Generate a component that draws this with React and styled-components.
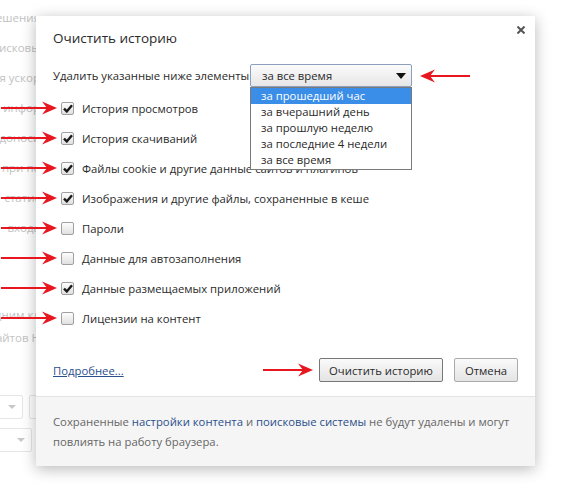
import React from 'react'
import styled, { createGlobalStyle } from 'styled-components'

const GlobalStyle = createGlobalStyle`
    html, body {
        margin: 0;
        padding: 0;
        background: #fff;
    }
    * {
        box-sizing: border-box;
    }
`

const Page = styled.div`
    position: relative;
    width: 569px;
    height: 497px;
    overflow: hidden;
    background: #fff;
    font-family: "Open Sans", "Noto Sans", sans-serif;
`

// faded settings page behind the modal
const BgColumn = styled.div`
    display: flex;
    flex-direction: column;
    width: 40px;
    padding-top: 2px;
`
const BgLine = styled.div`
    display: flex;
    justify-content: flex-end;
    align-items: center;
    overflow: hidden;
    white-space: nowrap;
    height: ${p => p.$h || 30}px;
    margin-top: ${p => p.$mt || 0}px;
    font-size: 11.5px;
    color: #c2c2c2;
`
const BgSelectRow = styled.div`
    display: flex;
    gap: 6px;
    margin-top: ${p => p.$mt || 0}px;
    margin-left: ${p => p.$ml}px;
`
const BgSelect = styled.div`
    flex: 0 0 ${p => p.$w}px;
    height: 24px;
    border: 1px solid #e6e6e6;
    border-radius: 2px;
    display: flex;
    align-items: center;
    justify-content: flex-end;
    padding-right: 6px;
    &::after {
        content: '';
        border-left: 4px solid transparent;
        border-right: 4px solid transparent;
        border-top: 4px solid #c8c8c8;
    }
`

const Dialog = styled.div`
    position: absolute;
    left: 36px;
    top: 16px;
    width: 499px;
    background: #fff;
    color: #2a2a2a;
    font-size: 11.3px;
    box-shadow: 0 3px 14px rgba(0, 0, 0, 0.28);
`
const Header = styled.div`
    display: flex;
    justify-content: space-between;
    align-items: flex-start;
    padding: 10px 10px 0 17px;
`
const Title = styled.h1`
    margin: 0;
    padding-top: 2px;
    font-size: 13.5px;
    font-weight: 400;
    line-height: 20px;
    color: #2a2a2a;
`
const Close = styled.button`
    border: 0;
    padding: 0;
    background: none;
    display: flex;
`
const Body = styled.div`
    padding: 0 17px 14px;
`
const SelectRow = styled.div`
    display: flex;
    align-items: center;
    margin-top: 16px;
`
const SelectLabel = styled.span`
    flex: 0 0 197px;
    white-space: nowrap;
`
const SelectWrap = styled.div`
    position: relative;
`
const Select = styled.div`
    width: 162px;
    height: 23px;
    border: 1px solid #8c9fbf;
    border-radius: 2px;
    background: linear-gradient(#fbfbfb, #e6e6e6);
    display: flex;
    align-items: center;
    justify-content: space-between;
    padding: 0 5px 0 11px;
    &::after {
        content: '';
        border-left: 5px solid transparent;
        border-right: 5px solid transparent;
        border-top: 6px solid #111;
    }
`
const Dropdown = styled.ul`
    position: absolute;
    top: 100%;
    left: 0;
    width: 162px;
    margin: 0;
    padding: 0 0 1px;
    list-style: none;
    background: #fff;
    border: 1px solid #7a7a7a;
    z-index: 2;
`
const DropItem = styled.li`
    height: 16px;
    line-height: 16px;
    padding-left: 10px;
    background: ${p => (p.$active ? '#3a8ee8' : 'transparent')};
    color: ${p => (p.$active ? '#fff' : '#2a2a2a')};
`
const Options = styled.div`
    display: flex;
    flex-direction: column;
    margin-top: 6px;
    padding-left: 8px;
`
const Option = styled.div`
    position: relative;
    display: flex;
    align-items: center;
    gap: 8px;
    height: 30px;
`
const Box = styled.span`
    flex: 0 0 13px;
    height: 13px;
    border: 1px solid #a0a0a0;
    border-radius: 2px;
    background: linear-gradient(#fdfdfd, #e0e0e0);
    display: flex;
    align-items: center;
    justify-content: center;
`
const Actions = styled.div`
    display: flex;
    align-items: center;
    padding-top: 25px;
`
const More = styled.a`
    color: #2b4f8c;
    text-decoration: underline;
    cursor: pointer;
`
const Buttons = styled.div`
    display: flex;
    gap: 11px;
    margin-left: auto;
`
const Button = styled.button`
    position: relative;
    width: ${p => p.$w}px;
    height: 24px;
    padding: 0;
    font: inherit;
    color: #2a2a2a;
    border: 1px solid ${p => (p.$primary ? '#777' : '#ababab')};
    border-radius: 2px;
    background: linear-gradient(#fafafa, #e4e4e4);
`
const Footer = styled.div`
    border-top: 1px solid #e3e3e3;
    background: #f5f5f5;
    padding: 15px 17px 14px;
    line-height: 20px;
    color: #666;
`
const FootLink = styled.a`
    color: #2b4f8c;
`
const ArrowSvg = styled.svg`
    position: absolute;
    top: 50%;
    margin-top: -7px;
    ${p => (p.$left ? `left: calc(100% + ${p.$gap}px);` : `right: calc(100% + ${p.$gap}px);`)}
    transform: ${p => (p.$left ? 'scaleX(-1)' : 'none')};
    overflow: visible;
`

const Arrow = ({ len, gap, left }) => (
    <ArrowSvg width={len} height="14" viewBox={`0 0 ${len} 14`} $gap={gap} $left={left}>
        <line x1="0" y1="7" x2={len - 8} y2="7" stroke="#e8161e" strokeWidth="2" />
        <path d={`M${len} 7 L${len - 15} 0.5 L${len - 10} 7 L${len - 15} 13.5 Z`} fill="#e8161e" />
    </ArrowSvg>
)

const Check = () => (
    <svg width="10" height="9" viewBox="0 0 10 9">
        <path d="M1 4.6 L3.8 7.4 L9 1.2" fill="none" stroke="#1a1a1a" strokeWidth="2.4" />
    </svg>
)

const bgLines = ['разрешения', 'поисковы', 'для ускор', 'ь инфор', 'доноси', 'при пе', 'статис', 'входа']

const periods = ['за прошедший час', 'за вчерашний день', 'за прошлую неделю', 'за последние 4 недели', 'за все время']

const options = [
    { label: 'История просмотров', on: true },
    { label: 'История скачиваний', on: true },
    { label: 'Файлы cookie и другие данные сайтов и плагинов', on: true },
    { label: 'Изображения и другие файлы, сохраненные в кеше', on: true },
    { label: 'Пароли', on: false },
    { label: 'Данные для автозаполнения', on: false },
    { label: 'Данные размещаемых приложений', on: true },
    { label: 'Лицензии на контент', on: false },
]

const App = () => {
    return (
        <Page>
            <GlobalStyle />
            <BgColumn>
                {bgLines.map(t => (
                    <BgLine key={t}>{t}</BgLine>
                ))}
                <BgLine $h={23} $mt={61}>одним кл</BgLine>
                <BgLine $h={23}>сайтов Н</BgLine>
                <BgSelectRow $mt={46} $ml={-40}>
                    <BgSelect $w={63} />
                    <BgSelect $w={60} />
                </BgSelectRow>
                <BgSelectRow $mt={9} $ml={-40}>
                    <BgSelect $w={72} />
                </BgSelectRow>
            </BgColumn>

            <Dialog>
                <Header>
                    <Title>Очистить историю</Title>
                    <Close aria-label="Закрыть">
                        <svg width="8" height="8" viewBox="0 0 8 8">
                            <path d="M0.5 0.5 L7.5 7.5 M7.5 0.5 L0.5 7.5" stroke="#555" strokeWidth="2" />
                        </svg>
                    </Close>
                </Header>
                <Body>
                    <SelectRow>
                        <SelectLabel>Удалить указанные ниже элементы</SelectLabel>
                        <SelectWrap>
                            <Select>за все время</Select>
                            <Arrow len={50} gap={8} left />
                            <Dropdown>
                                {periods.map((p, i) => (
                                    <DropItem key={p} $active={i === 0}>{p}</DropItem>
                                ))}
                            </Dropdown>
                        </SelectWrap>
                    </SelectRow>
                    <Options>
                        {options.map(o => (
                            <Option key={o.label}>
                                <Arrow len={56} gap={4} />
                                <Box>{o.on && <Check />}</Box>
                                {o.label}
                            </Option>
                        ))}
                    </Options>
                    <Actions>
                        <More>Подробнее...</More>
                        <Buttons>
                            <Button $primary $w={124}>
                                <Arrow len={50} gap={7} />
                                Очистить историю
                            </Button>
                            <Button $w={64}>Отмена</Button>
                        </Buttons>
                    </Actions>
                </Body>
                <Footer>
                    Сохраненные <FootLink>настройки контента</FootLink> и <FootLink>поисковые системы</FootLink> не будут удалены и могут
                    <br />
                    повлиять на работу браузера.
                </Footer>
            </Dialog>
        </Page>
    )
}

export default App
